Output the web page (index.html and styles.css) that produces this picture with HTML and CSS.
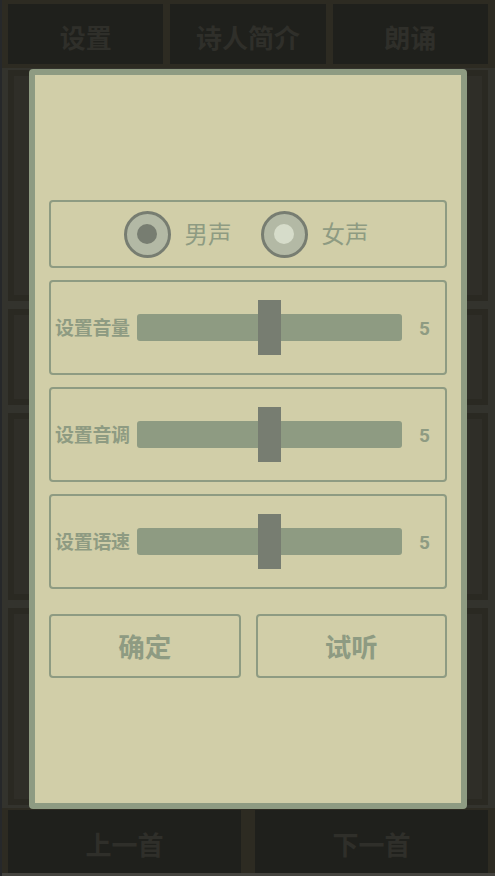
FILE: index.html
```html
<!DOCTYPE html>
<html lang="zh-CN">
<head>
<meta charset="utf-8">
<title>朗诵设置</title>
<link rel="stylesheet" href="styles.css">
</head>
<body>
<div class="app">
  <div class="topbar">
    <div class="tab">设置</div>
    <div class="tab">诗人简介</div>
    <div class="tab">朗诵</div>
  </div>
  <div class="content">
    <div class="card c1"></div>
    <div class="card c2"></div>
    <div class="card c3"></div>
    <div class="card c4"></div>
  </div>
  <div class="bottombar">
    <div class="tab">上一首</div>
    <div class="tab">下一首</div>
  </div>
  <div class="strip"></div>
</div>

<div class="dialog">
  <div class="box radios">
    <div class="radio">
      <span class="circle"><span class="dot dark"></span></span>
      <span class="rlabel">男声</span>
    </div>
    <div class="radio">
      <span class="circle"><span class="dot light"></span></span>
      <span class="rlabel">女声</span>
    </div>
  </div>

  <div class="box slider">
    <span class="slabel">设置音量</span>
    <div class="track"><span class="thumb"></span></div>
    <span class="value">5</span>
  </div>
  <div class="box slider">
    <span class="slabel">设置音调</span>
    <div class="track"><span class="thumb"></span></div>
    <span class="value">5</span>
  </div>
  <div class="box slider">
    <span class="slabel">设置语速</span>
    <div class="track"><span class="thumb"></span></div>
    <span class="value">5</span>
  </div>

  <div class="buttons">
    <div class="btn">确定</div>
    <div class="btn">试听</div>
  </div>
</div>
</body>
</html>
```

FILE: styles.css
```css
* { box-sizing: border-box; }
html, body {
  margin: 0;
  padding: 0;
}
body {
  width: 495px;
  height: 876px;
  overflow: hidden;
  background: #2d2b23;
  font-family: "Noto Sans CJK SC", "Noto Sans", sans-serif;
  position: relative;
}
.app {
  display: flex;
  flex-direction: column;
  height: 876px;
  border-left: 2px solid #26282a;
}
.topbar {
  display: flex;
  gap: 7px;
  padding: 4px 7px 4px 6px;
  height: 68px;
  background: #2d2b22;
}
.tab {
  flex: 1;
  background: #1f201c;
  color: #2f2f2a;
  font-weight: 700;
  font-size: 26px;
  display: flex;
  align-items: center;
  justify-content: center;
  padding-top: 4px;
}
.content {
  flex: 1;
  display: flex;
  flex-direction: column;
  gap: 8px;
  padding: 2px 7px 3px 6px;
  background: #33332d;
}
.card {
  background: #2f2e28;
  border: 6px solid #2a2922;
}
.c1 { height: 231px; }
.c2 { height: 96px; }
.c3 { height: 187px; }
.c4 { flex: 1; }
.bottombar {
  display: flex;
  gap: 14px;
  padding: 2px 7px 0 6px;
  height: 65px;
  background: #2d2b22;
}
.strip {
  height: 3px;
  background: #45443f;
}

.dialog {
  position: absolute;
  left: 29px;
  top: 69px;
  width: 438px;
  height: 740px;
  background: #d1cea8;
  border: 6px solid #8e9b82;
  border-radius: 4px;
  padding: 125px 14px 0 14px;
  display: flex;
  flex-direction: column;
}
.box {
  border: 2.5px solid #8e9b82;
  border-radius: 4px;
}
.radios {
  height: 68px;
  display: flex;
  align-items: center;
  justify-content: center;
  gap: 29px;
  padding-right: 4px;
}
.radio {
  display: flex;
  align-items: center;
  gap: 14px;
}
.circle {
  width: 47px;
  height: 47px;
  border-radius: 50%;
  border: 3px solid #777d71;
  background: #b3b9a5;
  display: flex;
  align-items: center;
  justify-content: center;
}
.dot {
  width: 20px;
  height: 20px;
  border-radius: 50%;
}
.dot.dark { background: #777d71; }
.dot.light { background: #d6dcca; }
.rlabel {
  font-size: 23.5px;
  color: #8e9b82;
  line-height: 1;
}
.slider {
  height: 95px;
  margin-top: 12px;
  display: flex;
  align-items: center;
  padding-left: 4px;
}
.slabel {
  font-size: 19px;
  font-weight: 700;
  color: #8e9b82;
  width: 78px;
  white-space: nowrap;
  letter-spacing: -0.3px;
  padding-bottom: 2px;
}
.track {
  position: relative;
  margin-left: 4px;
  width: 265px;
  height: 27px;
  background: #8e9b82;
  border-radius: 3px;
}
.thumb {
  position: absolute;
  left: 121px;
  top: -14px;
  width: 23px;
  height: 55px;
  background: #777d71;
}
.value {
  flex: 1;
  text-align: center;
  font-size: 19px;
  font-weight: 700;
  color: #8e9b82;
  font-family: "Roboto", "Noto Sans", sans-serif;
  padding-top: 2px;
  padding-left: 2px;
}
.buttons {
  display: flex;
  gap: 15px;
  margin-top: 25px;
}
.btn {
  flex: 1;
  height: 64px;
  border: 2.5px solid #8e9b82;
  border-radius: 4px;
  display: flex;
  align-items: center;
  justify-content: center;
  font-size: 26.5px;
  font-weight: 700;
  color: #8e9b82;
  padding-bottom: 2px;
}
```
